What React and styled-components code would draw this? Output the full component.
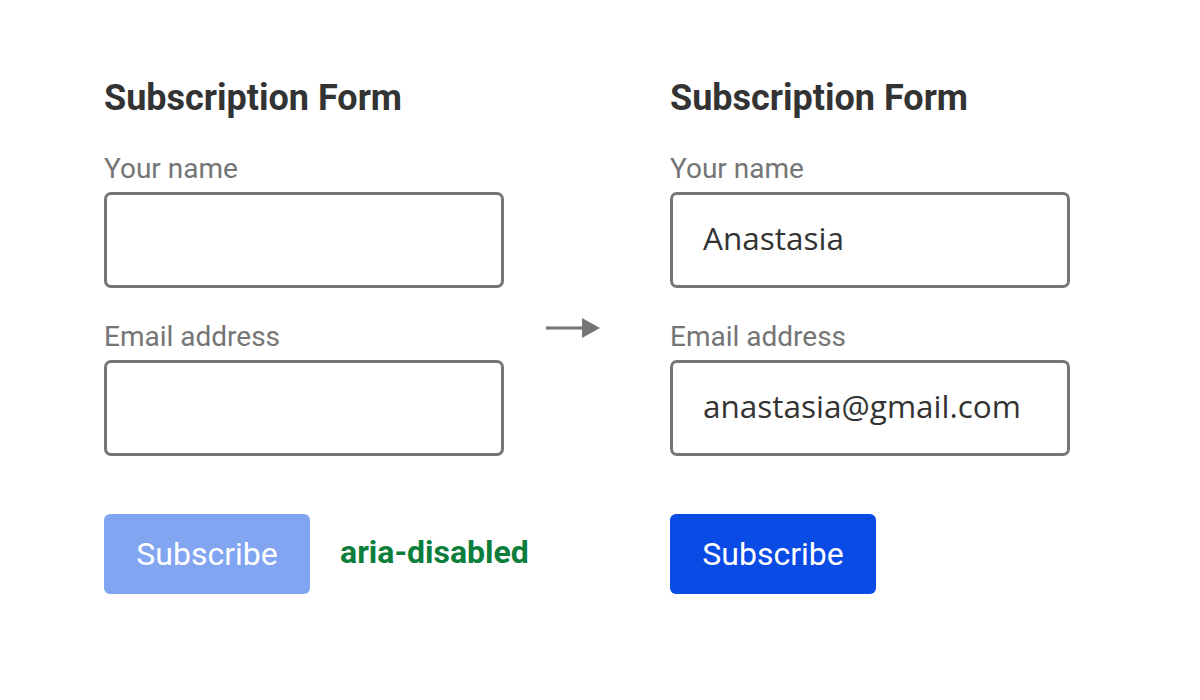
import React from 'react'
import styled, { createGlobalStyle } from 'styled-components'

const GlobalStyle = createGlobalStyle`
  body {
    margin: 0;
    background: #ffffff;
    font-family: Roboto, "Liberation Sans", sans-serif;
  }
`

const Page = styled.div`
  display: flex;
  align-items: flex-start;
  padding: 76px 0 0 104px;
  width: 1200px;
  height: 700px;
  box-sizing: border-box;
`

const Form = styled.div`
  display: flex;
  flex-direction: column;
  width: 400px;
`

const Title = styled.h2`
  margin: 0 0 36px;
  font-size: 36px;
  line-height: 44px;
  font-weight: 700;
  color: #333333;
`

const Label = styled.label`
  font-size: 28px;
  line-height: 26px;
  color: #757575;
  margin-bottom: 10px;
`

const Field = styled.div`
  box-sizing: border-box;
  height: 96px;
  border: 3px solid #757575;
  border-radius: 7px;
  padding: 0 30px 5px;
  display: flex;
  align-items: center;
  font-family: "Open Sans", sans-serif;
  font-size: 31.5px;
  color: #333333;
  margin-bottom: ${props => (props.last ? '58px' : '36px')};
`

const Actions = styled.div`
  display: flex;
  align-items: center;
  gap: 30px;
`

const Button = styled.button`
  flex-shrink: 0;
  width: 206px;
  height: 80px;
  border: none;
  border-radius: 6px;
  background: ${props => (props.disabledLook ? '#82a5f2' : '#0a4be6')};
  color: #ffffff;
  font-family: Roboto, "Liberation Sans", sans-serif;
  font-size: 32px;
  cursor: pointer;
`

const Note = styled.span`
  font-size: 32px;
  font-weight: 700;
  color: #0a7e3a;
  white-space: nowrap;
  margin-top: -4px;
`

const ArrowBox = styled.div`
  width: 166px;
  display: flex;
  justify-content: center;
  padding-top: 240px;
  padding-right: 26px;
  box-sizing: border-box;
`

const Arrow = () => (
  <svg width="56" height="24" viewBox="0 0 56 24">
    <rect x="0" y="10.5" width="38" height="3" fill="#757575" />
    <polygon points="36,2 54,12 36,22" fill="#757575" />
  </svg>
)

const SubscriptionForm = ({ name, email, disabled }) => (
  <Form>
    <Title>Subscription Form</Title>
    <Label>Your name</Label>
    <Field>{name}</Field>
    <Label>Email address</Label>
    <Field last>{email}</Field>
    <Actions>
      <Button disabledLook={disabled} aria-disabled={disabled}>
        Subscribe
      </Button>
      {disabled && <Note>aria-disabled</Note>}
    </Actions>
  </Form>
)

const App = () => (
  <>
    <GlobalStyle />
    <Page>
      <SubscriptionForm disabled />
      <ArrowBox>
        <Arrow />
      </ArrowBox>
      <SubscriptionForm name="Anastasia" email="anastasia@gmail.com" />
    </Page>
  </>
)

export default App
